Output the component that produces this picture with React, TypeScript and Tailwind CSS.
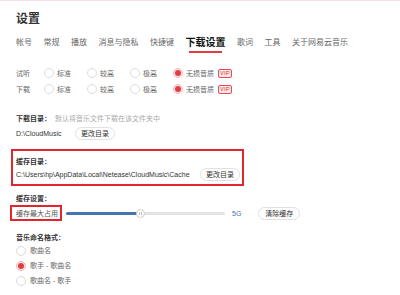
import React from "react";

const tabs = ["帐号", "常规", "播放", "消息与隐私", "快捷键", "下载设置", "歌词", "工具", "关于网易云音乐"];
const qualities = ["标准", "较高", "极高"];

function Radio({ checked }: { checked?: boolean }) {
  return checked ? (
    <span className="flex h-[10px] w-[10px] shrink-0 items-center justify-center rounded-full border border-[#f4b4b6] bg-[#fdeced]">
      <span className="h-[6px] w-[6px] rounded-full bg-[#e33b3f]" />
    </span>
  ) : (
    <span className="h-[10px] w-[10px] shrink-0 rounded-full border border-[#dcdcdc] bg-white" />
  );
}

function QualityRow({ label }: { label: string }) {
  return (
    <div className="flex h-4 items-center">
      <span className="w-[28px] text-[#666]">{label}</span>
      {qualities.map((q) => (
        <span key={q} className="flex w-[43px] items-center gap-[3px] text-[#666]">
          <Radio />
          {q}
        </span>
      ))}
      <span className="flex items-center gap-[3px] text-[#666]">
        <Radio checked />
        无损音质
        <span className="ml-[1px] rounded-[2px] border border-[#e8474b] bg-[#fdeaea] px-[1px] text-[6px] leading-[7px] text-[#e33b3f]">
          VIP
        </span>
      </span>
    </div>
  );
}

function PillButton({ children }: { children: React.ReactNode }) {
  return (
    <button className="flex h-[13px] w-[40px] items-center justify-center rounded-full border border-[#e1e1e1] bg-white text-[7px] text-[#333]">
      {children}
    </button>
  );
}

export default function App() {
  return (
    <div className="h-[295px] w-[400px] overflow-hidden border-t border-[#f7e1e3] bg-white font-['Liberation_Sans','Noto_Sans_CJK_SC',sans-serif] text-[7px] leading-none">
      <div className="px-4">
        {/* Header */}
        <h1 className="mt-[10px] h-4 text-[12px] leading-4 font-bold text-[#333]">设置</h1>

        {/* Tabs */}
        <nav className="mt-2 flex h-4 items-center gap-[11.5px] text-[8px] text-[#666]">
          {tabs.map((t) =>
            t === "下载设置" ? (
              <span key={t} className="relative text-[10px] font-bold text-[#111]">
                {t}
                <span className="absolute left-[3px] right-[4px] top-[13px] h-[1.5px] bg-[#e33b3f]" />
              </span>
            ) : (
              <span key={t}>{t}</span>
            ),
          )}
        </nav>

        {/* Quality */}
        <div className="mt-[14px]">
          <QualityRow label="试听" />
          <QualityRow label="下载" />
        </div>

        {/* Download dir */}
        <div className="mt-[15px] flex h-[12px] items-center">
          <span className="font-bold text-[#333]">下载目录：</span>
          <span className="ml-[4px] text-[#aaa]">默认将音乐文件下载在该文件夹中</span>
        </div>
        <div className="mt-[2px] flex h-[14px] items-center">
          <span className="w-[59px] text-[#333]">D:\CloudMusic</span>
          <PillButton>更改目录</PillButton>
        </div>

        {/* Cache dir */}
        <div className="-ml-[5px] mt-[9px] w-[233px] border-2 border-[#e2262c] pb-[3px] pl-[3px] pr-[2px] pt-1">
          <div className="flex h-[12px] items-center font-bold text-[#333]">缓存目录：</div>
          <div className="flex h-[14px] items-center justify-between">
            <span className="text-[#333]">C:\Users\hp\AppData\Local\Netease\CloudMusic\Cache</span>
            <PillButton>更改目录</PillButton>
          </div>
        </div>

        {/* Cache size */}
        <div className="mt-[6px] flex h-[12px] items-center font-bold text-[#333]">缓存设置：</div>
        <div className="mt-[1px] flex h-4 items-center">
          <span className="-ml-[6px] flex h-4 w-[52px] items-center border-2 border-[#e2262c] pl-[4px] text-[#555]">
            缓存最大占用
          </span>
          <div className="relative ml-[4px] h-[3px] w-[159px] rounded-full bg-[#e3e3e3]">
            <div className="h-[3px] w-[75px] rounded-full bg-[#4574b0]" />
            <span className="absolute left-[70px] top-[-3px] flex h-[9px] w-[9px] items-center justify-center gap-[1px] rounded-full border border-[#cfcfcf] bg-white">
              <span className="h-[3px] w-[1px] bg-[#bbb]" />
              <span className="h-[3px] w-[1px] bg-[#bbb]" />
            </span>
          </div>
          <span className="ml-[7px] text-[#4574b0]">5G</span>
          <span className="ml-[17px]">
            <button className="flex h-[13px] w-[42px] items-center justify-center rounded-full border border-[#e1e1e1] bg-white text-[7px] text-[#333]">
              清除缓存
            </button>
          </span>
        </div>

        {/* Naming */}
        <div className="mt-[10px] flex h-[12px] items-center font-bold text-[#333]">音乐命名格式：</div>
        <div className="flex flex-col text-[#666]">
          <label className="flex h-[15px] items-center gap-[4px]">
            <Radio />
            歌曲名
          </label>
          <label className="flex h-[15px] items-center gap-[4px]">
            <Radio checked />
            歌手 - 歌曲名
          </label>
          <label className="flex h-[15px] items-center gap-[4px]">
            <Radio />
            歌曲名 - 歌手
          </label>
        </div>
      </div>
    </div>
  );
}
